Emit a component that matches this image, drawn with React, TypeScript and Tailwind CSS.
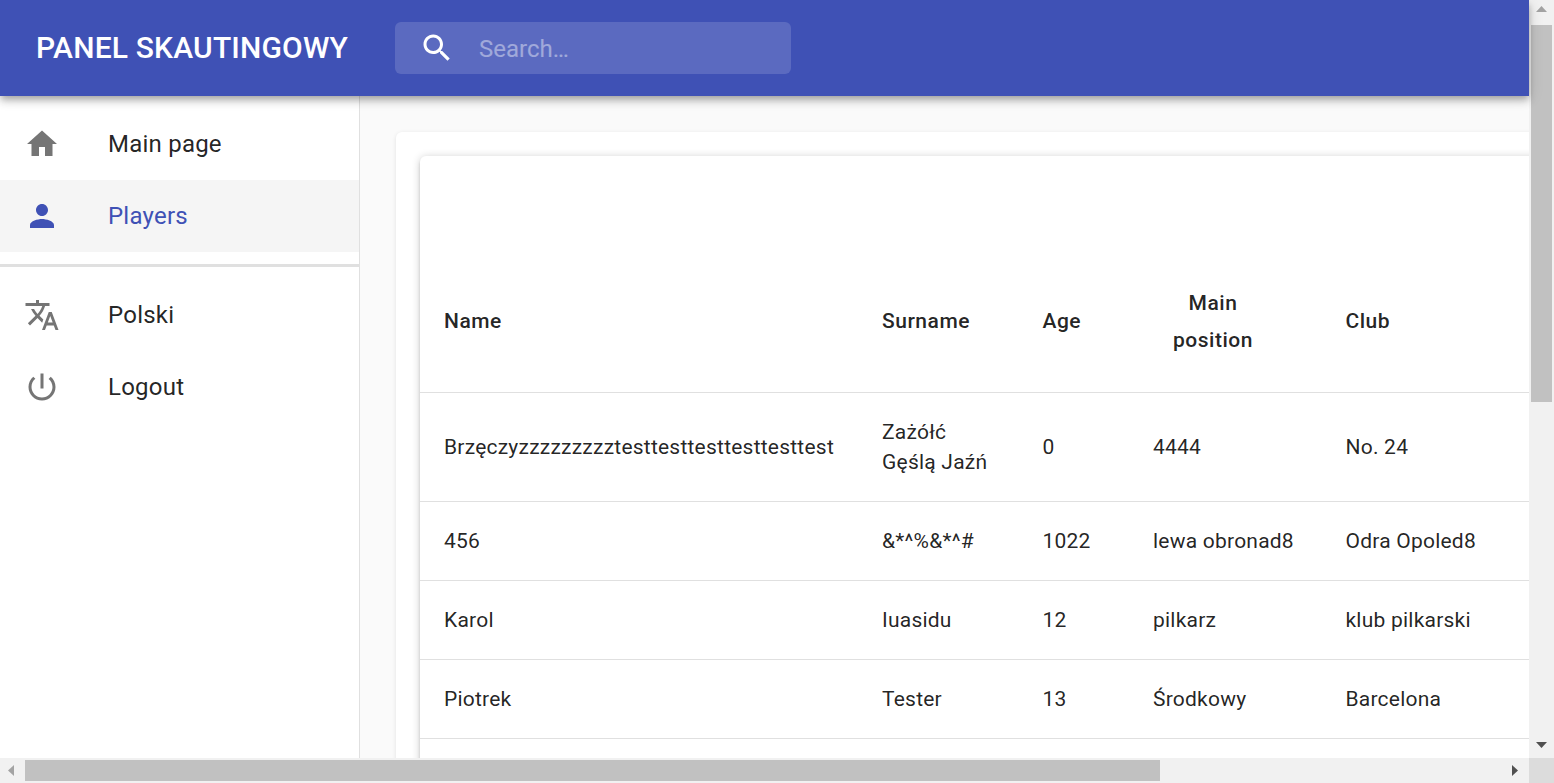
import type { ReactNode } from 'react'

const HOME = 'M10 20v-6h4v6h5v-8h3L12 3 2 12h3v8z'
const PERSON = 'M12 12c2.21 0 4-1.79 4-4s-1.79-4-4-4-4 1.79-4 4 1.79 4 4 4zm0 2c-2.67 0-8 1.34-8 4v2h16v-2c0-2.66-5.33-4-8-4z'
const TRANSLATE = 'M12.87 15.07l-2.54-2.51.03-.03c1.74-1.94 2.98-4.17 3.71-6.53H17V4h-7V2H8v2H1v1.99h11.17C11.5 7.92 10.44 9.75 9 11.35 8.07 10.32 7.3 9.19 6.69 8h-2c.73 1.63 1.73 3.17 2.98 4.56l-5.09 5.02L4 19l5-5 3.11 3.11.76-2.04zM18.5 10h-2L12 22h2l1.12-3h4.75L21 22h2l-4.5-12zm-2.62 7l1.62-4.33L19.12 17h-3.24z'
const POWER = 'M13 3h-2v10h2V3zm4.83 2.17l-1.42 1.42C17.99 7.86 19 9.81 19 12c0 3.87-3.13 7-7 7s-7-3.13-7-7c0-2.19 1.01-4.14 2.58-5.42L6.17 5.17C4.23 6.82 3 9.26 3 12c0 4.97 4.03 9 9 9s9-4.03 9-9c0-2.74-1.23-5.18-3.17-6.83z'
const SEARCH = 'M15.5 14h-.79l-.28-.27C15.41 12.59 16 11.11 16 9.5 16 5.91 13.09 3 9.5 3S3 5.91 3 9.5 5.91 16 9.5 16c1.61 0 3.09-.59 4.23-1.57l.27.28v.79l5 4.99L20.49 19l-4.99-5zm-6 0C7.01 14 5 11.99 5 9.5S7.01 5 9.5 5 14 7.01 14 9.5 11.99 14 9.5 14z'

function Icon({ d, className }: { d: string; className: string }) {
  return (
    <svg viewBox="0 0 24 24" className={`h-9 w-9 fill-current ${className}`}>
      <path d={d} />
    </svg>
  )
}

function NavItem({ icon, label, active }: { icon: string; label: string; active?: boolean }) {
  return (
    <div className={`flex h-[72px] items-center pl-6 ${active ? 'bg-[#f5f5f5]' : ''}`}>
      <div className="w-[84px] shrink-0">
        <Icon d={icon} className={active ? 'text-[#3f51b5]' : 'text-[#757575]'} />
      </div>
      <span className={`text-[24px] tracking-[0.00938em] ${active ? 'text-[#3f51b5]' : 'text-black/87'}`}>{label}</span>
    </div>
  )
}

function Arrow({ points, className }: { points: string; className: string }) {
  return (
    <svg viewBox="0 0 11 11" className={`h-[11px] w-[11px] ${className}`}>
      <polygon points={points} />
    </svg>
  )
}

function ScrollButton({ children }: { children: ReactNode }) {
  return <div className="flex h-[25px] w-[25px] shrink-0 items-center justify-center">{children}</div>
}

const players = [
  { name: 'Brzęczyzzzzzzzzztesttesttesttesttesttest', surname: ['Zażółć', 'Gęślą Jaźń'], age: '0', position: '4444', club: 'No. 24' },
  { name: '456', surname: ['&*^%&*^#'], age: '1022', position: 'lewa obronad8', club: 'Odra Opoled8' },
  { name: 'Karol', surname: ['Iuasidu'], age: '12', position: 'pilkarz', club: 'klub pilkarski' },
  { name: 'Piotrek', surname: ['Tester'], age: '13', position: 'Środkowy', club: 'Barcelona' },
]

export default function App() {
  return (
    <div className="flex h-screen w-screen flex-col overflow-hidden bg-white font-['Roboto',sans-serif]">
      <div className="flex min-h-0 flex-1">
        <div className="flex min-w-0 flex-1 flex-col">
          {/* App bar */}
          <header className="relative z-10 flex h-24 shrink-0 items-center bg-[#3f51b5] pl-9 text-white shadow-[0_3px_6px_-1.5px_rgba(0,0,0,0.2),0_6px_7.5px_0_rgba(0,0,0,0.14),0_1.5px_15px_0_rgba(0,0,0,0.12)]">
            <h1 className="mb-[2px] text-[30px] font-medium tracking-[0.006em]">PANEL SKAUTINGOWY</h1>
            <div className="ml-[47px] flex h-[52px] w-[396px] items-center rounded-md bg-white/15">
              <div className="flex w-[84px] shrink-0 justify-center">
                <Icon d={SEARCH} className="text-white" />
              </div>
              <span className="mt-[2px] text-[24px] text-white/42">Search…</span>
            </div>
          </header>

          <div className="flex min-h-0 flex-1">
            {/* Drawer */}
            <aside className="w-[360px] shrink-0 border-r border-[#e0e0e0] bg-white">
              <div className="py-3">
                <NavItem icon={HOME} label="Main page" />
                <NavItem icon={PERSON} label="Players" active />
              </div>
              <div className="h-[3px] bg-[#e0e0e0]" />
              <div className="py-3">
                <NavItem icon={TRANSLATE} label="Polski" />
                <NavItem icon={POWER} label="Logout" />
              </div>
            </aside>

            {/* Content */}
            <main className="min-w-0 flex-1 overflow-hidden bg-[#fafafa] pl-9 pt-9">
              <div className="h-[900px] w-[1900px] rounded-md bg-white p-6 shadow-[0_1.5px_4px_0_rgba(0,0,0,0.1)]">
                <div className="h-[800px] w-[1800px] rounded-md bg-white shadow-[0_4.5px_1.5px_-3px_rgba(0,0,0,0.2),0_3px_3px_0_rgba(0,0,0,0.14),0_1.5px_9px_0_rgba(0,0,0,0.2)]">
                  <div className="h-24" />
                  <table className="w-full table-fixed text-left text-[21px] tracking-[0.01071em] text-black/87">
                    <colgroup>
                      <col className="w-[438px]" />
                      <col className="w-[160.5px]" />
                      <col className="w-[110.5px]" />
                      <col className="w-[192.5px]" />
                      <col />
                    </colgroup>
                    <thead>
                      <tr className="h-[140px] border-b border-[#e0e0e0] font-medium leading-[37px] tracking-[0.0245em]">
                        <th className="pl-6 font-medium">Name</th>
                        <th className="pl-6 font-medium">Surname</th>
                        <th className="pl-6 font-medium">Age</th>
                        <th className="pl-6 font-medium">
                          <div className="w-[120px] text-center">Main position</div>
                        </th>
                        <th className="pl-6 font-medium">Club</th>
                      </tr>
                    </thead>
                    <tbody className="leading-[30px]">
                      {players.map((p) => (
                        <tr key={p.name} className="border-b border-[#e0e0e0]">
                          <td className="py-6 pl-6">{p.name}</td>
                          <td className="py-6 pl-6">
                            {p.surname.map((line) => (
                              <div key={line}>{line}</div>
                            ))}
                          </td>
                          <td className="py-6 pl-6">{p.age}</td>
                          <td className="py-6 pl-6">{p.position}</td>
                          <td className="py-6 pl-6">{p.club}</td>
                        </tr>
                      ))}
                    </tbody>
                  </table>
                </div>
              </div>
            </main>
          </div>
        </div>

        {/* Vertical scrollbar */}
        <div className="flex w-[25px] shrink-0 flex-col bg-[#f1f1f1]">
          <ScrollButton>
            <Arrow points="5.5,0 11,6 0,6" className="-translate-y-[1px] fill-[#a3a3a3]" />
          </ScrollButton>
          <div className="mx-[2px] h-[377px] bg-[#c1c1c1]" />
          <div className="flex-1" />
          <ScrollButton>
            <Arrow points="0,0 11,0 5.5,6" className="translate-y-[2px] fill-[#505050]" />
          </ScrollButton>
        </div>
      </div>

      {/* Horizontal scrollbar */}
      <div className="flex h-[25px] shrink-0 bg-[#f1f1f1]">
        <ScrollButton>
          <Arrow points="6,0 6,11 0,5.5" className="translate-x-[1px] fill-[#a3a3a3]" />
        </ScrollButton>
        <div className="my-[2px] w-[1135px] bg-[#c1c1c1]" />
        <div className="flex-1" />
        <ScrollButton>
          <Arrow points="0,0 6,5.5 0,11" className="translate-x-[1px] fill-[#505050]" />
        </ScrollButton>
        <div className="w-[25px] bg-[#dcdcdc]" />
      </div>
    </div>
  )
}
